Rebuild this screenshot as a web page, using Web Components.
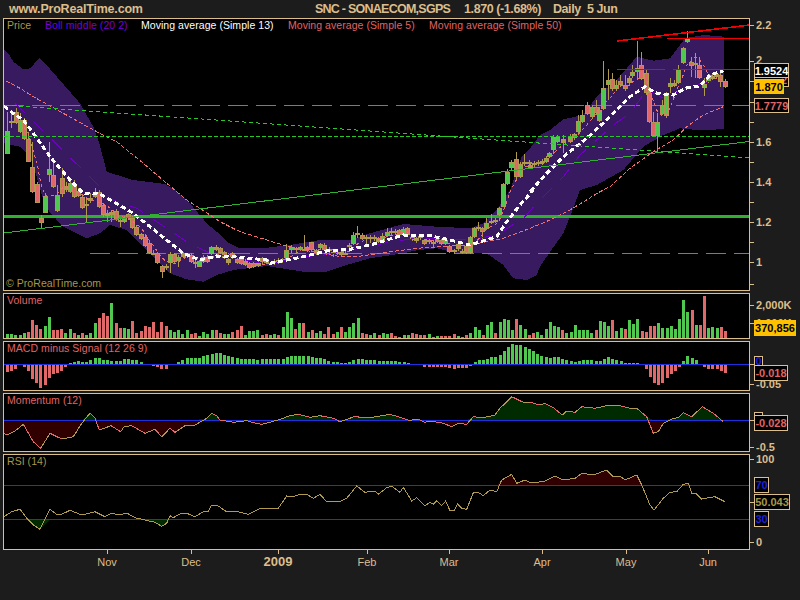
<!DOCTYPE html>
<html><head><meta charset="utf-8"><title>SNC - ProRealTime</title>
<style>html,body{margin:0;padding:0;background:#1c1c1c;width:800px;height:600px;overflow:hidden}</style>
</head><body>
<pro-chart>
  <chart-header></chart-header>
  <chart-row>
    <plot-pane slot="pane" kind="price" top="18" height="273">
      <span slot="legend" style="color:#a89848;width:38px">Price</span>
      <span slot="legend" style="color:#7800d8;width:96px">Boll middle (20 2)</span>
      <span slot="legend" style="color:#fff;width:147px">Moving average (Simple 13)</span>
      <span slot="legend" style="color:#e06464;width:141px">Moving average (Simple 5)</span>
      <span slot="legend" style="color:#e06464">Moving average (Simple 50)</span>
      <span slot="foot" style="color:#a89848">© ProRealTime.com</span>
    </plot-pane>
    <axis-scale slot="axis" top="18" height="273" ticks="25:2.2|61:2|81|102|122|142:1.6|162|182:1.4|202|222:1.2|242|262:1|284">
      <value-badge y="72" h="15" w="35" color="#e06464" bg="#000" end="1">2</value-badge>
      <value-badge y="63" h="15" w="35" color="#fff" bg="#000">1.9524</value-badge>
      <value-badge y="79" h="15" w="30" color="#000" bg="#ffc000" nb="1">1.870</value-badge>
      <value-badge y="98" h="15" w="35" color="#e06464" bg="#000">1.7779</value-badge>
    </axis-scale>
  </chart-row>
  <chart-row>
    <plot-pane slot="pane" kind="volume" top="293" height="46"><span slot="legend" style="color:#e06464">Volume</span></plot-pane>
    <axis-scale slot="axis" top="293" height="46" ticks="305:2,000K|323:1,000K">
      <value-badge y="320" h="16" w="42" color="#000" bg="#ffc000" nb="1">370,856</value-badge>
    </axis-scale>
  </chart-row>
  <chart-row>
    <plot-pane slot="pane" kind="macd" top="341" height="50"><span slot="legend" style="color:#e06464">MACD minus Signal (12 26 9)</span></plot-pane>
    <axis-scale slot="axis" top="341" height="50" ticks="364|384:-0.05">
      <value-badge y="356" h="10" w="9" color="#2020d8" bg="#000">0</value-badge>
      <value-badge y="365" h="16" w="34" color="#e06464" bg="#000">-0.018</value-badge>
    </axis-scale>
  </chart-row>
  <chart-row>
    <plot-pane slot="pane" kind="momentum" top="393" height="59"><span slot="legend" style="color:#e06464">Momentum (12)</span></plot-pane>
    <axis-scale slot="axis" top="393" height="59" ticks="420|447:-0.5">
      <value-badge y="412" h="6" w="9" color="#2020d8" bg="#000"></value-badge>
      <value-badge y="415" h="16" w="34" color="#e06464" bg="#000">-0.028</value-badge>
    </axis-scale>
  </chart-row>
  <chart-row>
    <plot-pane slot="pane" kind="rsi" top="454" height="96"><span slot="legend" style="color:#a89848">RSI (14)</span></plot-pane>
    <axis-scale slot="axis" top="454" height="96" ticks="459:100|502|542:0">
      <value-badge y="477" h="16" w="15" color="#2020d8" bg="#000">70</value-badge>
      <value-badge y="494" h="16" w="36" color="#a89848" bg="#000">50.043</value-badge>
      <value-badge y="511" h="16" w="15" color="#2020d8" bg="#000">30</value-badge>
    </axis-scale>
  </chart-row>
  <time-axis ticks="107:Nov|191:Dec|278:2009:b|367:Feb|449:Mar|542:Apr|626:May|708:Jun"></time-axis>
</pro-chart>
<script>
const TAN='#dcbe8c',G='#50c850',R='#e06868',OL='#b09a50',LINE='#30b030',BLUE='#2030e0',PURPLE='#381a60';
const FONT='"Liberation Sans",Arial,sans-serif';

/* ---- data ---- */
const VOL=[4,4,3,3,5,-6,-18,-13,-9,12,21,-8,-8,-9,5,9,-5,3,-5,3,5,15,-20,-25,-22,35,-15,-10,10,9,-17,-5,-7,-12,-11,-16,-6,-16,-12,8,6,8,4,8,-4,-5,2,6,4,8,-8,-5,4,4,-6,-8,-12,3,7,7,8,-3,-4,
3,4,-3,11,26,20,-9,15,-15,6,-8,5,7,-4,-11,-4,6,-11,6,11,15,20,-5,-4,3,5,-3,5,4,-5,-2,-1,3,3,-5,-4,-3,-3,4,-1,2,-2,-2,-2,-4,2,-1,-3,5,11,8,-3,13,16,-5,16,19,18,8,-19,13,9,-3,
-5,6,3,9,16,12,11,-8,5,6,13,8,8,8,5,-8,17,16,12,-18,7,10,-9,18,14,19,-7,-6,-12,-12,15,10,10,12,9,19,38,26,-28,13,-13,-42,10,11,10,-11,-7];
const MACD=[-8,-7,-5,-1,-3,-7,-15,-19,-24,-21,-14,-10,-9,-7,-3,1,2,3,2,2,4,6,6,4,4,3,3,3,5,5,4,4,2,0,-1,-2,-3,-5,-5,-1,0,2,4,6,6,6,6,8,9,10,11,11,9,8,7,6,5,5,5,5,4,5,5,
5,5,5,5,7,8,8,8,8,8,7,6,6,5,3,2,2,1,1,2,4,5,5,4,4,4,3,3,3,3,3,2,2,1,0,0,-1,-3,-3,-3,-3,-3,-3,-4,-5,-4,-4,-4,-2,2,4,4,5,7,7,9,13,17,20,19,19,17,15,
13,10,8,7,6,7,7,5,4,3,2,3,4,4,4,3,3,5,7,5,4,3,1,1,1,1,-1,-5,-13,-19,-21,-19,-14,-10,-7,-3,3,8,6,4,0,-3,-5,-5,-5,-7,-9];
/* zoom-crop coordinates (3x) with their crop origin */
const Z=(ox,oy,a)=>a.map(p=>[ox+p[0]/3,oy+p[1]/3]);
const CANDLES=[
 [0,0,[[22,393,463,337,463,'g'],[34,363,370,340,385,'t'],[47,337,370,325,372,'r'],[60,360,395,340,398,'g'],[72,360,418,355,420,'r'],[85,418,485,395,487,'r'],[97,502,575,425,580,'r'],[110,553,608,545,610,'r'],[122,655,670,645,685,'r'],[135,587,638,580,640,'g'],[147,507,525,425,547,'g'],[160,525,560,490,565,'r'],[172,585,632,555,635,'g'],[185,535,583,505,590,'r'],[197,558,570,545,575,'t'],[210,548,575,535,578,'g'],[222,555,590,540,595,'r'],[235,575,588,565,592,'r'],[247,590,625,585,628,'r'],[259,613,617,590,665,'t'],[271,595,603,580,610,'g'],[284,578,590,565,595,'t'],[297,575,622,570,625,'r']]],
 [0,190,[[309,45,75,40,80,'r'],[322,70,78,60,95,'t'],[334,65,75,60,95,'g'],[347,62,90,58,92,'r'],[360,90,95,85,110,'t'],[373,83,97,78,100,'g'],[385,72,85,68,90,'r'],[397,83,115,78,118,'r'],[409,110,135,105,138,'r'],[422,132,147,128,150,'r'],[435,140,168,135,172,'r'],[447,160,190,150,193,'r'],[460,188,192,180,196,'t'],[472,190,220,185,222,'r'],[485,228,245,225,263,'r'],[497,228,232,222,240,'t'],[510,193,218,185,248,'g'],[522,193,215,190,218,'r'],[535,200,212,195,230,'g'],[548,190,200,186,205,'t'],[560,192,198,188,204,'t'],[573,195,215,190,218,'r'],[585,215,222,210,235,'t'],[597,213,230,210,232,'g'],[610,200,215,195,218,'t'],[622,200,215,196,218,'r'],[634,172,192,168,195,'g'],[647,170,180,166,184,'t'],[660,175,190,172,192,'r'],[672,185,205,182,208,'r'],[685,208,220,204,224,'t'],[697,190,205,186,208,'r'],[710,208,218,205,222,'r'],[722,208,222,205,226,'r'],[735,212,225,208,228,'t'],[748,218,235,215,238,'r'],[760,218,230,214,234,'r'],[773,218,228,214,232,'t'],[785,205,217,202,222,'r'],[797,208,218,204,222,'g']]],
 [270,190,[[12,213,220,208,224,'t'],[24,210,218,205,222,'r'],[37,208,213,204,220,'t'],[49,180,203,162,206,'g'],[64,170,180,165,190,'g'],[77,175,180,170,188,'t'],[89,172,180,168,184,'g'],[101,176,180,135,184,'t'],[112,172,180,168,186,'r'],[124,157,180,155,186,'r'],[137,180,190,176,196,'t'],[150,162,175,158,180,'g'],[163,165,180,160,184,'r'],[176,178,184,172,188,'t'],[188,185,190,178,200,'t'],[200,185,190,180,196,'t'],[213,185,195,180,198,'g'],[226,188,192,184,196,'t'],[238,165,172,160,178,'r'],[250,135,162,125,165,'g'],[262,130,135,108,145,'t'],[275,135,147,130,150,'r'],[288,140,147,135,165,'t'],[300,140,147,135,160,'t'],[312,140,147,135,152,'t'],[325,145,155,140,160,'t'],[337,137,155,130,158,'g'],[350,125,138,115,142,'g'],[362,122,130,115,135,'t'],[375,122,130,116,136,'t'],[387,120,135,116,138,'r'],[400,118,132,112,136,'g'],[412,115,135,112,138,'r'],[425,140,150,136,154,'r'],[438,145,152,140,158,'t'],[450,137,145,133,150,'t'],[463,150,162,146,166,'r'],[476,150,157,146,162,'t'],[488,155,160,150,170,'t'],[500,145,155,140,160,'t'],[513,150,163,147,166,'r'],[526,150,163,147,166,'g'],[538,167,187,164,190,'r'],[551,180,187,176,193,'t'],[563,163,178,158,182,'g'],[576,182,188,178,192,'t'],[588,168,188,164,192,'r'],[600,142,188,138,192,'g'],[613,115,140,112,143,'g'],[625,110,118,97,122,'t'],[637,115,125,110,152,'r'],[649,98,117,84,120,'g'],[664,92,100,72,103,'g'],[676,90,95,85,100,'t'],[688,55,75,50,78,'g'],[700,-17,50,-22,52,'g'],[712,-53,-18,-64,-15,'g'],[724,-85,-67,-90,-60,'g'],[739,-92,-40,-113,-30,'r'],[751,-77,-40,-85,-37,'g'],[763,-85,-80,-108,-72,'t'],[776,-84,-80,-90,-72,'t']]],
 [530,0,[[0,495,503,488,508,'t'],[12,488,495,482,500,'t'],[25,485,493,480,498,'t'],[37,482,488,476,494,'t'],[47,473,485,468,490,'g'],[58,460,470,455,475,'g'],[70,412,450,405,462,'g'],[82,410,425,405,430,'g'],[100,418,428,405,460,'t'],[120,408,425,402,428,'g'],[133,403,415,398,420,'r'],[145,363,395,345,400,'g'],[157,345,365,330,368,'g'],[172,316,342,305,345,'r'],[185,322,352,316,356,'g'],[197,322,340,300,345,'r'],[208,330,362,320,365,'g'],[220,265,328,182,330,'g'],[233,240,254,208,300,'g'],[247,237,268,218,272,'r'],[259,255,268,240,272,'g'],[271,243,255,225,260,'r'],[284,255,268,225,272,'r'],[296,235,248,228,252,'t'],[307,217,228,195,235,'g'],[322,205,217,122,240,'g'],[334,195,237,155,240,'r'],[347,220,280,210,284,'r'],[358,275,365,265,368,'r'],[370,365,408,335,410,'r'],[382,367,408,340,455,'g'],[396,315,342,300,346,'g'],[409,280,347,275,355,'g'],[421,250,260,235,280,'g'],[433,250,258,240,262,'t'],[445,208,250,195,252,'g'],[458,145,190,140,193,'g'],[472,118,125,93,128,'g'],[484,185,197,170,230,'r'],[496,188,195,158,235,'t'],[508,195,233,170,236,'r'],[521,252,265,235,287,'g'],[533,233,246,225,250,'g'],[547,228,236,222,240,'t'],[559,222,232,216,236,'t'],[571,225,245,213,262,'r'],[584,244,262,237,265,'r']]]
];
const PTS=(...gs)=>gs.flatMap(g=>Z(g[0],g[1],g[2]));
const UPPER=PTS([0,0,[[12,150],[25,160],[40,185],[70,208],[90,205],[118,175],[135,190],[170,230],[240,310],[280,380],[298,430],[320,515],[398,540],[495,552],[525,570]]],[0,190,[[570,40],[620,100],[650,125],[680,155],[720,175],[800,175]]],[270,190,[[0,172],[60,165],[150,150],[240,150],[300,130],[400,102],[500,110],[600,115],[640,100],[680,60],[720,0]]],[530,0,[[-25,470],[0,445],[30,405],[60,390],[100,358],[160,345],[200,290],[260,240],[320,170],[370,182],[420,175],[465,115],[520,105],[583,110]]]);
const LOWER=PTS([0,0,[[12,430],[60,440],[90,470],[110,530],[130,600]]],[0,190,[[150,68],[190,110],[260,145],[300,130],[330,105],[380,120],[440,180],[480,220],[510,250],[560,268],[610,275],[650,255],[700,240],[800,228]]],[270,190,[[100,245],[170,245],[230,225],[300,205],[400,190],[445,180],[500,175],[560,190],[650,190],[700,225],[730,265],[770,270],[800,255]]],[530,190,[[30,230],[50,200],[100,130],[120,80],[150,0]]],[530,0,[[200,555],[280,510],[340,440],[400,405],[450,385],[500,390],[583,388]]]);
const MA13=PTS([0,0,[[12,318],[40,340],[70,360],[100,400],[150,470],[210,540],[250,580],[300,582]]],[0,190,[[340,35],[400,70],[450,110],[500,150],[550,190],[600,210],[650,198],[700,200],[800,210]]],[270,190,[[0,220],[100,200],[170,183],[240,178],[300,165],[400,135],[480,137],[540,150],[600,165],[680,140],[710,95],[750,45],[790,0]]],[530,0,[[0,575],[50,520],[100,470],[170,415],[240,350],[300,290],[345,260],[380,280],[430,285],[470,263],[510,258],[540,225],[580,212]]]);
const MA50=PTS([0,0,[[18,243],[60,265],[100,290],[190,340],[290,395],[350,425],[430,490],[500,550],[560,600]]],[0,190,[[600,55],[660,95],[720,125],[800,150]]],[270,190,[[40,165],[100,180],[200,198],[260,200],[350,187],[440,175],[510,170],[600,165],[700,145],[780,115]]],[530,190,[[60,90],[120,60],[210,5]]],[530,0,[[240,560],[300,505],[370,455],[430,420],[470,380],[520,345],[580,320]]]);
const BOLL=PTS([0,0,[[45,310],[340,600]]],[0,190,[[410,55],[560,155],[630,190],[800,222]]],[270,190,[[100,200],[150,197],[220,185],[365,155],[440,145],[600,150],[680,135],[760,85],[810,30]]],[530,0,[[30,600],[100,530],[150,465],[200,420],[250,375],[300,340],[350,270],[400,295],[470,265],[520,248],[560,240]]]);
const MOM=PTS([0,385,[[12,145],[22,150],[45,138],[70,118],[100,170],[122,190],[150,145],[185,162],[220,155],[245,115],[270,85],[285,100],[298,135],[333,122],[362,140],[372,125],[395,122],[435,145],[465,133],[485,155],[510,130],[525,142],[555,122],[580,123],[620,100],[635,85],[650,92],[660,105],[700,112],[740,107],[760,113],[785,118]]],[270,385,[[0,112],[30,103],[60,92],[85,88],[120,97],[150,92],[190,100],[210,110],[240,100],[250,95],[300,98],[360,88],[400,100],[420,107],[430,103],[445,103],[465,112],[480,108],[520,115],[545,125],[565,115],[590,118],[610,95],[640,98],[675,90],[690,70],[725,35],[760,52]]],[530,385,[[0,52],[30,60],[45,55],[70,68],[97,90],[110,78],[135,82],[155,65],[195,70],[230,62],[270,62],[300,70],[320,70],[350,95],[370,145],[385,140],[400,115],[430,100],[445,98],[460,83],[485,95],[517,65],[550,85],[580,110]]]);
const RSI=PTS([0,385,[[12,395],[35,380],[60,373],[85,405],[100,420],[120,433],[150,373],[170,388],[185,388],[210,376],[245,390],[285,380],[315,395],[335,385],[360,390],[380,384],[405,398],[435,405],[465,412],[485,424],[500,415],[510,392],[520,398],[540,387],[560,385],[585,395],[610,380],[625,380],[635,360],[650,360],[680,380],[710,379],[745,388],[780,370]]],[270,385,[[0,370],[25,370],[50,333],[70,335],[85,330],[110,328],[130,340],[150,328],[170,350],[210,350],[230,340],[260,303],[285,322],[315,318],[325,328],[350,308],[365,303],[390,322],[400,307],[425,348],[440,338],[465,362],[480,352],[490,358],[500,347],[515,362],[527,348],[540,377],[552,377],[563,357],[575,370],[590,373],[610,323],[625,322],[640,332],[660,315],[680,320],[695,285],[725,268],[740,295],[765,285]]],[530,385,[[0,293],[40,290],[75,273],[100,285],[135,280],[155,265],[190,270],[230,255],[250,275],[270,273],[285,285],[320,270],[335,300],[360,360],[372,375],[400,340],[420,322],[440,320],[460,298],[475,295],[485,325],[497,325],[515,342],[555,335],[585,350]]]);

/* ---- svg helpers ---- */
const pstr=a=>a.map(p=>p[0].toFixed(1)+','+p[1].toFixed(1)).join(' ');
const rect=(x,y,w,h,f)=>`<rect x="${x}" y="${y}" width="${w}" height="${h}" fill="${f}"/>`;
const line=(a,c,w=1,d='')=>`<polyline points="${pstr(a)}" fill="none" stroke="${c}" stroke-width="${w}"${d?` stroke-dasharray="${d}"`:''}/>`;
const barX=i=>Math.round(6+i*718/172);

function priceSVG(){
  let s=`<polygon points="${pstr(UPPER.concat(LOWER.slice().reverse()))}" fill="${PURPLE}"/>`;
  s+=line([[4,216.5],[750,216.5]],LINE,3);
  s+=line([[4,105.5],[750,105.5]],LINE,1,'20 8');
  s+=line([[90,253.5],[750,253.5]],LINE,1,'20 8');
  const closes=[];
  CANDLES.forEach(([ox,oy,list])=>list.forEach(c=>{
    const x=Math.round(ox+c[0]/3), t=Math.round(oy+c[1]/3), b=Math.round(oy+c[2]/3), hi=Math.round(oy+c[3]/3), lo=Math.round(oy+c[4]/3);
    closes.push([x, c[5]=='g'?t:c[5]=='r'?b:(t+b)/2]);
    s+=rect(x,hi,1,lo-hi,OL)+rect(x-2,t,5,Math.max(b-t,2),OL);
    if(c[5]!='t'&&b-t>2) s+=rect(x-1,t+1,3,b-t-2,c[5]=='g'?G:R);
  }));
  const ma5=closes.slice(4).map((c,i)=>[c[0],closes.slice(i,i+5).reduce((a,v)=>a+v[1],0)/5]);
  s+=line(BOLL,'#7000c8',1,'14 12');
  s+=line(MA50,'#ee7070',1,'4 2');
  s+=line(ma5,'#ee7070',1,'3 3');
  s+=line(MA13,'#fff',3,'5 3');
  s+=line([[4,136.5],[750,136.5]],'#28c828',1,'4 2');
  s+=line([[5,105],[749,158]],'#28c828',1,'4 3');
  s+=line([[4,233],[749,141.5]],LINE,1);
  s+=line([[617,41],[750,25]],'#f00000',1.6);
  s+=line([[667,38.5],[750,38.5]],'#f00000',1.6);
  s+=line([[617,69.5],[665,69.5]],'#f00000',1);
  s+=line([[673,69.5],[750,69.5]],'#f00000',1);
  return s;
}
function volumeSVG(){return VOL.map((v,i)=>rect(barX(i),338-Math.abs(v),3,Math.abs(v),v>0?G:R)).join('');}
function macdSVG(){
  return MACD.map((v,i)=>v>0?rect(barX(i),364-v,3,v,G):v<0?rect(barX(i),364,3,-v,R):'').join('')+line([[4,364.5],[750,364.5]],BLUE,1);
}
function areaPair(pts,hiBase,loBase,hiCol,loCol){
  const x0=pts[0][0],x1=pts[pts.length-1][0];
  const up=pts.map(p=>[p[0],Math.min(p[1],hiBase)]).concat([[x1,hiBase],[x0,hiBase]]);
  const dn=pts.map(p=>[p[0],Math.max(p[1],loBase)]).concat([[x1,loBase],[x0,loBase]]);
  return `<polygon points="${pstr(up)}" fill="${hiCol}"/><polygon points="${pstr(dn)}" fill="${loCol}"/>`;
}
function momentumSVG(){
  let s=areaPair(MOM,420.5,420.5,'#002a00','#300000');
  s+=line([[4,420.5],[750,420.5]],BLUE,1);
  for(let i=1;i<MOM.length;i++) s+=line([MOM[i-1],MOM[i]],MOM[i][1]>MOM[i-1][1]?R:OL,1);
  return s;
}
function rsiSVG(){
  let s=areaPair(RSI,485.5,519.5,'#300000','#002a00');
  s+=line([[4,485.5],[750,485.5]],BLUE,1)+line([[4,519.5],[750,519.5]],BLUE,1);
  s+=line(RSI,OL,1);
  return s;
}
const DRAW={price:priceSVG,volume:volumeSVG,macd:macdSVG,momentum:momentumSVG,rsi:rsiSVG};

/* ---- components ---- */
class ProChart extends HTMLElement{constructor(){super();this.attachShadow({mode:'open'}).innerHTML=
`<style>:host{display:flex;flex-direction:column;gap:0;width:800px;height:600px;background:#1c1c1c;font-family:${FONT}}
::slotted(chart-row:not(:last-of-type)){margin-bottom:2px}</style><slot></slot>`;}}
class ChartHeader extends HTMLElement{constructor(){super();this.attachShadow({mode:'open'}).innerHTML=
`<style>:host{display:flex;align-items:center;height:18px;padding-left:9px;box-sizing:border-box;color:${TAN};font:bold 12.5px ${FONT};letter-spacing:-.2px;white-space:pre}
.site{flex:0 0 306px}.a{letter-spacing:-.75px}.b{margin-left:14px;letter-spacing:-.42px}.c{margin-left:12px;letter-spacing:-.4px}</style>
<span class="site">www.ProRealTime.com</span><span class="a">SNC - SONAECOM,SGPS</span><span class="b">1.870 (-1.68%)</span><span class="c">Daily  5 Jun</span>`;}}
class ChartRow extends HTMLElement{constructor(){super();this.attachShadow({mode:'open'}).innerHTML=
`<style>:host{display:flex;padding-left:3px}</style><slot name="pane"></slot><slot name="axis"></slot>`;}}
class PlotPane extends HTMLElement{connectedCallback(){
  const top=+this.getAttribute('top'),h=+this.getAttribute('height');
  this.attachShadow({mode:'open'}).innerHTML=
  `<style>:host{display:grid;width:747px;height:${h}px;box-sizing:border-box;border:1px solid ${TAN};background:#000;overflow:hidden;font:10.5px ${FONT};letter-spacing:.05px}
  svg,.legend,.foot{grid-area:1/1}svg{display:block}
  .legend{display:flex;align-self:start;padding:0 0 0 3px;white-space:pre}
  .foot{align-self:end;padding:0 0 1px 2px}
  ::slotted([slot=legend]){display:inline-block;flex:none}
  </style>
  <svg xmlns="http://www.w3.org/2000/svg" width="745" height="${h-2}" viewBox="4 ${top+1} 745 ${h-2}" shape-rendering="crispEdges">${DRAW[this.getAttribute('kind')]()}</svg>
  <div class="legend"><slot name="legend"></slot></div><div class="foot"><slot name="foot"></slot></div>`;
}}
class AxisScale extends HTMLElement{connectedCallback(){
  const top=+this.getAttribute('top'),h=+this.getAttribute('height');
  const ticks=this.getAttribute('ticks').split('|').map(t=>t.split(':'));
  this.attachShadow({mode:'open'}).innerHTML=
  `<style>:host{display:block;position:relative;width:50px;height:${h}px;color:${TAN};font:bold 11px ${FONT}}
  i{position:absolute;left:0;width:4px;height:1px;background:${TAN}}
  b{position:absolute;left:6px;transform:translateY(-50%);white-space:nowrap;line-height:10px}
  </style>${ticks.map(([y,l])=>`<i style="top:${y-top}px"></i>${l?`<b style="top:${y-top-(l=='2'?1.5:.5)}px">${l}</b>`:''}`).join('')}<slot></slot>`;
  this.querySelectorAll('value-badge').forEach(b=>b.style.top=(b.getAttribute('y')-top)+'px');
}}
class ValueBadge extends HTMLElement{connectedCallback(){
  const a=n=>this.getAttribute(n);
  this.attachShadow({mode:'open'}).innerHTML=
  `<style>:host{position:absolute;left:4px;display:flex;align-items:center;justify-content:${a('end')?'flex-end':'center'};box-sizing:border-box;z-index:2;
  width:${a('w')}px;height:${a('h')}px;background:${a('bg')};color:${a('color')};font:bold 11px ${FONT};line-height:10px;padding-right:${a('end')?1:0}px;${a('nb')?'':`border:1px solid ${TAN};`}white-space:nowrap}</style><slot></slot>`;
}}
class TimeAxis extends HTMLElement{connectedCallback(){
  const ticks=this.getAttribute('ticks').split('|').map(t=>t.split(':'));
  this.attachShadow({mode:'open'}).innerHTML=
  `<style>:host{display:block;position:relative;height:50px;color:${TAN};font:11px ${FONT}}
  i{position:absolute;top:0;width:1px;height:4px;background:${TAN}}
  span{position:absolute;top:5px;transform:translateX(-50%);line-height:14px}
  .b{font-weight:bold;font-size:13px}
  </style>${ticks.map(([x,l,b])=>`<i style="left:${x}px"></i><span class="${b||''}" style="left:${x}px">${l}</span>`).join('')}`;
}}
customElements.define('pro-chart',ProChart);
customElements.define('chart-header',ChartHeader);
customElements.define('chart-row',ChartRow);
customElements.define('plot-pane',PlotPane);
customElements.define('axis-scale',AxisScale);
customElements.define('value-badge',ValueBadge);
customElements.define('time-axis',TimeAxis);
</script>
</body></html>
